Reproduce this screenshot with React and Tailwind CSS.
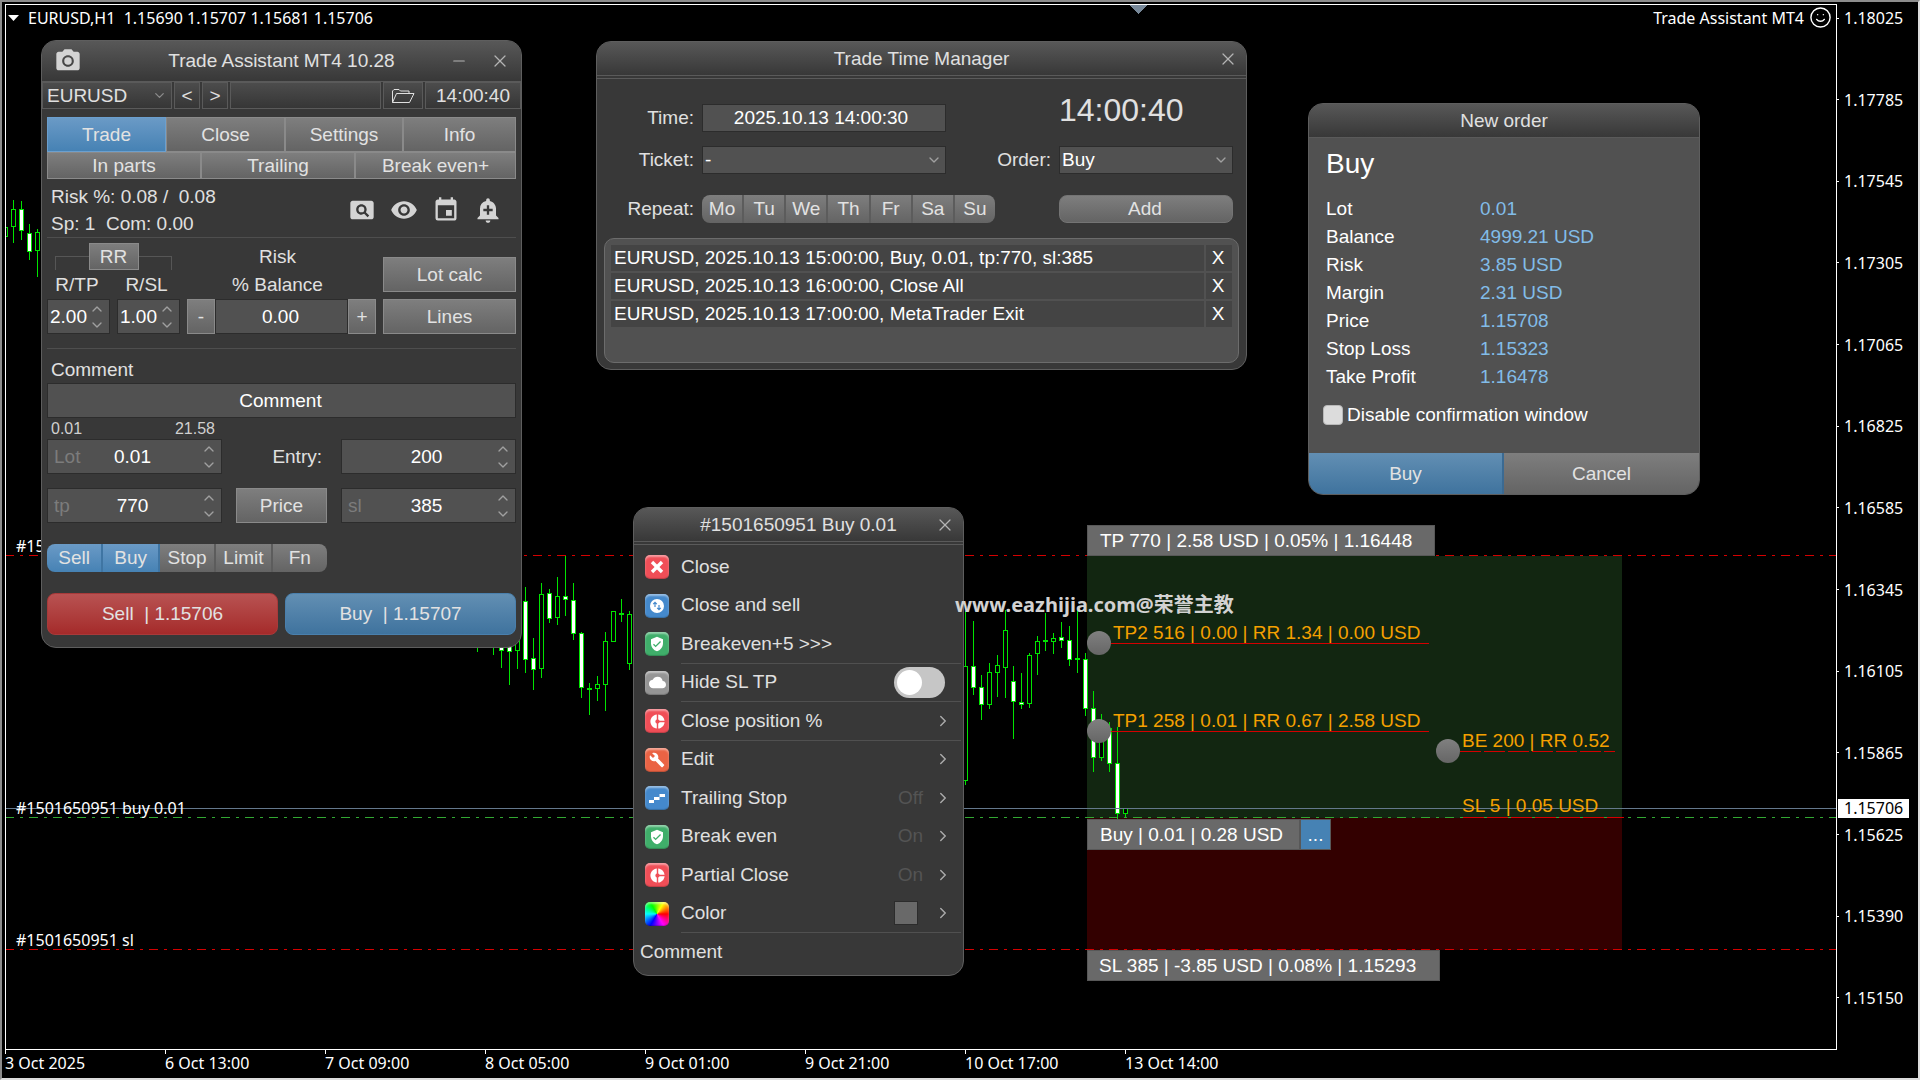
import React, { useState } from 'react';
import {
  MdPhotoCamera,
  MdPageview,
  MdVisibility,
  MdEvent,
  MdAddAlert,
  MdVerifiedUser,
  MdCloud,
  MdDonutSmall,
  MdBuild,
} from 'react-icons/md';
import { ChevronDown, ChevronUp, ChevronRight, Smile, X, Minus } from 'lucide-react';

// Price scale, top to bottom
const prices = [
  '1.18025', '1.17785', '1.17545', '1.17305', '1.17065', '1.16825', '1.16585',
  '1.16345', '1.16105', '1.15865', '1.15625', '1.15390', '1.15150',
];

const dates = [
  '3 Oct 2025', '6 Oct 13:00', '7 Oct 09:00', '8 Oct 05:00',
  '9 Oct 01:00', '9 Oct 21:00', '10 Oct 17:00', '13 Oct 14:00',
];

// [x, high, low, body top, body bottom, 1 = bearish (filled)]
const candles = [
  [5, 165, 252, 227, 237, 0],
  [13, 200, 243, 209, 227, 0],
  [21, 201, 240, 209, 231, 1],
  [29, 224, 260, 233, 252, 1],
  [37, 229, 277, 232, 251, 0],
  [477, 600, 652, 610, 640, 0],
  [493, 600, 655, 610, 640, 0],
  [501, 600, 668, 610, 651, 1],
  [509, 600, 685, 610, 652, 1],
  [517, 600, 669, 610, 651, 0],
  [525, 587, 673, 601, 660, 1],
  [533, 638, 690, 658, 670, 1],
  [541, 583, 678, 594, 669, 0],
  [549, 589, 623, 593, 619, 1],
  [557, 577, 625, 596, 618, 0],
  [565, 556, 616, 596, 600, 1],
  [573, 583, 640, 600, 634, 1],
  [581, 632, 698, 633, 688, 1],
  [589, 683, 715, 688, 690, 0],
  [597, 676, 701, 684, 689, 0],
  [605, 632, 711, 641, 685, 0],
  [613, 611, 642, 611, 642, 0],
  [621, 599, 622, 613, 615, 0],
  [629, 611, 670, 614, 664, 0],
  [965, 611, 785, 666, 781, 0],
  [973, 621, 695, 666, 688, 1],
  [981, 675, 720, 687, 705, 1],
  [989, 663, 709, 672, 705, 0],
  [997, 655, 697, 665, 673, 0],
  [1005, 610, 698, 630, 668, 0],
  [1013, 666, 739, 681, 702, 1],
  [1021, 673, 709, 702, 705, 1],
  [1029, 653, 708, 655, 704, 0],
  [1037, 636, 675, 641, 654, 0],
  [1045, 613, 651, 640, 642, 0],
  [1053, 633, 654, 638, 642, 0],
  [1061, 622, 648, 637, 641, 1],
  [1069, 626, 666, 640, 660, 1],
  [1077, 609, 673, 658, 660, 0],
  [1085, 653, 716, 659, 709, 1],
  [1093, 691, 772, 708, 758, 1],
  [1101, 714, 761, 728, 758, 0],
  [1109, 722, 772, 728, 764, 1],
  [1117, 727, 819, 763, 814, 1],
  [1125, 808, 817, 808, 814, 0],
];

const scheduled = [
  'EURUSD, 2025.10.13 15:00:00, Buy, 0.01, tp:770, sl:385',
  'EURUSD, 2025.10.13 16:00:00, Close All',
  'EURUSD, 2025.10.13 17:00:00, MetaTrader Exit',
];

const orderDetails = [
  ['Lot', '0.01'],
  ['Balance', '4999.21 USD'],
  ['Risk', '3.85 USD'],
  ['Margin', '2.31 USD'],
  ['Price', '1.15708'],
  ['Stop Loss', '1.15323'],
  ['Take Profit', '1.16478'],
];

const windowClass = 'absolute flex flex-col overflow-hidden rounded-[15px] border border-[#5e5e5e] bg-[#383838]';
const greyButton = 'flex items-center justify-center border border-[#8a8a8a] bg-gradient-to-b from-[#7e7e7e] to-[#646464] text-[#e2e2e2]';
const blueButton = 'flex items-center justify-center border border-[#6b9fce] bg-gradient-to-b from-[#6a9ac6] to-[#4682b4] text-[#e2e2e2]';
const field = 'border border-[#2c2c2c] bg-[#515151] text-white';
const toolCell = 'flex items-center border border-[#5a5a5a] bg-gradient-to-b from-[#4c4c4c] to-[#363636]';

const TitleBar = ({ title, height, left, right }) => (
  <header className={`grid shrink-0 grid-cols-[1fr_auto_1fr] items-center border-b border-[#5a5a5a] bg-gradient-to-b from-[#585858] to-[#383838] ${height}`}>
    <div className="flex items-center pl-[12px]">{left}</div>
    <h2 className="text-[#e0e0e0]">{title}</h2>
    <div className="flex items-center justify-end pr-[8px] text-[#b4b4b4]">{right}</div>
  </header>
);

const CloseButton = () => (
  <button aria-label="Close window">
    <X size={20} strokeWidth={1.5} />
  </button>
);

// Text box with up/down arrows and an optional faint caption
const Spinner = ({ label, caption, value, compact }) => (
  <div className={`flex h-[35px] items-center ${compact ? 'w-[63px]' : 'min-w-0'} ${field}`}>
    {!compact && <span className="w-[20px] shrink-0 whitespace-nowrap pl-[6px] text-[#7c7c7c]">{caption}</span>}
    <input
      aria-label={label}
      defaultValue={value}
      className={compact ? 'w-[42px] bg-transparent pl-[2px] outline-none' : 'w-0 min-w-0 flex-1 bg-transparent text-center outline-none'}
    />
    <div className={`flex shrink-0 flex-col items-center text-[#a0a0a0] ${compact ? 'w-[14px]' : 'w-[24px]'}`}>
      <button aria-label={`${label} up`}><ChevronUp size={16} strokeWidth={2} /></button>
      <button aria-label={`${label} down`}><ChevronDown size={16} strokeWidth={2} /></button>
    </div>
  </div>
);

const SegmentButton = ({ children, active, first, last }) => (
  <button
    className={`flex flex-1 items-center justify-center text-[#e2e2e2] ${last ? '' : 'border-r-2'} ${first ? 'rounded-l-[8px]' : ''} ${last ? 'rounded-r-[8px]' : ''} ${
      active ? 'border-[#3f75a3] bg-gradient-to-b from-[#6a9ac6] to-[#4682b4]' : 'border-[#5c5c5c] bg-gradient-to-b from-[#7e7e7e] to-[#646464]'
    }`}
  >
    {children}
  </button>
);

const TradePanel = () => {
  const tabs = ['Trade', 'Close', 'Settings', 'Info'];
  const modes = ['Sell', 'Buy', 'Stop', 'Limit', 'Fn'];
  const [tab, setTab] = useState('Trade');

  return (
    <section className={`${windowClass} left-[41px] top-[40px] w-[481px]`}>
      <TitleBar
        title="Trade Assistant MT4 10.28"
        height="h-[41px]"
        left={<MdPhotoCamera size={28} className="text-[#d4d4d4]" />}
        right={
          <div className="flex items-center gap-[22px] pr-[3px]">
            <button aria-label="Minimize"><Minus size={18} strokeWidth={1.5} /></button>
            <CloseButton />
          </div>
        }
      />
      <div className="flex h-[27px] shrink-0 gap-[2px] text-[#e0e0e0]">
        <div className={`relative w-[130px] ${toolCell}`}>
          <select aria-label="Symbol" className="w-full appearance-none pl-[4px] outline-none">
            <option>EURUSD</option>
          </select>
          <ChevronDown size={15} className="pointer-events-none absolute right-[4px] text-[#8c8c8c]" />
        </div>
        <button className={`w-[26px] justify-center ${toolCell}`}>&lt;</button>
        <button className={`w-[26px] justify-center ${toolCell}`}>&gt;</button>
        <div className={`flex-1 ${toolCell}`} />
        <button aria-label="Open file" className={`w-[40px] justify-center ${toolCell}`}>
          <svg width="24" height="16" viewBox="0 0 24 16" fill="none" stroke="currentColor" strokeLinejoin="round">
            <path d="M1.500 14.500V3L3 1.500h5L9.500 3H18v2.500M1.500 14.500L5.500 5.500H23l-4.500 9z" />
          </svg>
        </button>
        <div className={`w-[96px] justify-center ${toolCell}`}>14:00:40</div>
      </div>

      <div className="px-[5px] pb-[12px] pt-[8px]">
        <nav className="grid grid-cols-[119px_119px_118px_1fr]">
          {tabs.map((name) => (
            <button key={name} onClick={() => setTab(name)} className={`h-[35px] ${name === tab ? blueButton : greyButton}`}>
              {name}
            </button>
          ))}
        </nav>
        <nav className="grid grid-cols-[154px_154px_1fr]">
          <button className={`h-[27px] ${greyButton}`}>In parts</button>
          <button className={`h-[27px] ${greyButton}`}>Trailing</button>
          <button className={`h-[27px] ${greyButton}`}>Break even+</button>
        </nav>

        <div className="flex items-center justify-between border-b border-[#4e4e4e] pl-[4px] pr-[14px] pt-[4px] leading-[27px] text-[#e0e0e0]">
          <div className="whitespace-pre">
            <p>{'Risk %: 0.08 /  0.08'}</p>
            <p>{'Sp: 1  Com: 0.00'}</p>
          </div>
          <div className="flex gap-[14px] text-[#d4d4d4]">
            <button aria-label="Find"><MdPageview size={28} /></button>
            <button aria-label="Show"><MdVisibility size={28} /></button>
            <button aria-label="Schedule"><MdEvent size={28} /></button>
            <button aria-label="Add alert"><MdAddAlert size={28} /></button>
          </div>
        </div>

        {/* Risk settings */}
        <div className="grid grid-cols-[133px_1fr_133px] gap-x-[7px] border-b border-[#4e4e4e] pb-[14px] pt-[5px] text-[#e0e0e0]">
          <div>
            <div className="flex h-[27px] items-end justify-center px-[8px]">
              <span className="h-[14px] flex-1 border-l border-t border-[#565656]" />
              <button className={`h-full w-[50px] ${greyButton}`}>RR</button>
              <span className="h-[14px] flex-1 border-r border-t border-[#565656]" />
            </div>
            <div className="flex justify-between text-center leading-[29px]">
              <span className="w-[60px]">R/TP</span>
              <span className="w-[67px]">R/SL</span>
            </div>
            <div className="flex justify-between">
              <Spinner label="R/TP" value="2.00" compact />
              <Spinner label="R/SL" value="1.00" compact />
            </div>
          </div>
          <div>
            <p className="pr-[8px] text-center leading-[28px]">Risk</p>
            <p className="pr-[8px] text-center leading-[28px]">% Balance</p>
            <div className="grid h-[35px] grid-cols-[28px_1fr_28px]">
              <button className={greyButton}>-</button>
              <input aria-label="Risk percent of balance" defaultValue="0.00" className={`min-w-0 pr-[2px] text-center outline-none ${field}`} />
              <button className={greyButton}>+</button>
            </div>
          </div>
          <div className="flex flex-col gap-[7px] pt-[14px]">
            <button className={`h-[35px] ${greyButton}`}>Lot calc</button>
            <button className={`h-[35px] ${greyButton}`}>Lines</button>
          </div>
        </div>

        <label className="block pl-[4px] pt-[8px] leading-[26px] text-[#e0e0e0]" htmlFor="comment">Comment</label>
        <input id="comment" defaultValue="Comment" className={`h-[35px] w-full pr-[2px] text-center outline-none ${field}`} />
        <div className="flex w-[175px] justify-between pl-[4px] pr-[7px] text-[16px] leading-[21px] text-[#d0d0d0]">
          <span>0.01</span>
          <span>21.58</span>
        </div>
        <div className="grid grid-cols-[175px_1fr_175px] gap-y-[14px]">
          <Spinner label="Lot" caption="Lot" value="0.01" />
          <span className="self-center pr-[19px] text-right text-[#e0e0e0]">Entry:</span>
          <Spinner label="Entry" value="200" />
          <Spinner label="Take profit" caption="tp" value="770" />
          <button className={`mx-[14px] ${greyButton}`}>Price</button>
          <Spinner label="Stop loss" caption="sl" value="385" />
        </div>

        <div className="mt-[21px] flex h-[28px] w-[280px]">
          {modes.map((mode, i) => (
            <SegmentButton key={mode} active={i < 2} first={i === 0} last={i === modes.length - 1}>{mode}</SegmentButton>
          ))}
        </div>
        <div className="mt-[21px] grid h-[42px] grid-cols-2 gap-[7px] whitespace-pre text-[#e2e2e2]">
          <button className="rounded-[8px] border border-[#a83a3a] bg-gradient-to-b from-[#b85252] to-[#a52a2a]">{'Sell  | 1.15706'}</button>
          <button className="rounded-[8px] border border-[#4a80ad] bg-gradient-to-b from-[#628fb3] to-[#3f739e]">{'Buy  | 1.15707'}</button>
        </div>
      </div>
    </section>
  );
};

const TimeManager = () => {
  const days = ['Mo', 'Tu', 'We', 'Th', 'Fr', 'Sa', 'Su'];

  return (
    <section className={`${windowClass} left-[596px] top-[41px] w-[651px] text-[#e0e0e0]`}>
      <TitleBar title="Trade Time Manager" height="h-[34px]" right={<CloseButton />} left={null} />
      <div className="mt-[2px] border-t border-[#5a5a5a] pt-[15px]">
        <div className="grid grid-cols-[97px_244px_97px_174px] gap-x-2">
          <label htmlFor="tm-time" className="self-end text-right leading-[28px]">Time:</label>
          <input id="tm-time" defaultValue="2025.10.13 14:00:30" className={`h-[28px] self-end pr-[6px] text-center outline-none ${field}`} />
          <span />
          <span className="h-[38px] self-start text-[32px] leading-[32px]">14:00:40</span>

          <label htmlFor="tm-ticket" className="mt-[14px] text-right leading-[28px]">Ticket:</label>
          <div className={`relative mt-[14px] flex h-[28px] items-center ${field}`}>
            <select id="tm-ticket" className="w-full appearance-none pl-[2px] outline-none"><option>-</option></select>
            <ChevronDown size={16} className="pointer-events-none absolute right-[3px] text-[#a0a0a0]" />
          </div>
          <label htmlFor="tm-order" className="mt-[14px] text-right leading-[28px]">Order:</label>
          <div className={`relative mt-[14px] flex h-[28px] items-center ${field}`}>
            <select id="tm-order" className="w-full appearance-none pl-[2px] outline-none"><option>Buy</option></select>
            <ChevronDown size={16} className="pointer-events-none absolute right-[3px] text-[#a0a0a0]" />
          </div>

          <span className="mt-[21px] text-right leading-[28px]">Repeat:</span>
          <div className="col-span-2 mt-[21px] flex h-[28px] w-[293px]">
            {days.map((day, i) => (
              <SegmentButton key={day} first={i === 0} last={i === 6}>{day}</SegmentButton>
            ))}
          </div>
          <button className="mt-[21px] flex h-[28px] items-center justify-center rounded-[8px] border border-[#747474] bg-gradient-to-b from-[#7e7e7e] to-[#646464] pr-[2px] text-[#e2e2e2]">
            Add
          </button>
        </div>

        <ul className="mx-[7px] mb-[6px] mt-[15px] flex h-[125px] flex-col gap-[2px] rounded-[10px] border border-[#6c6c6c] bg-[#515151] p-[6px] text-white">
          {scheduled.map((item) => (
            <li key={item} className="grid h-[26px] grid-cols-[1fr_26px] gap-[2px] leading-[26px]">
              <span className="bg-[#444444] pl-[3px]">{item}</span>
              <button className="bg-[#444444] pr-[2px]" aria-label={`Remove ${item}`}>X</button>
            </li>
          ))}
        </ul>
      </div>
    </section>
  );
};

const NewOrder = () => (
  <section className={`${windowClass} left-[1308px] top-[103px] w-[392px] text-white`}>
    <TitleBar title="New order" height="h-[34px]" left={null} right={null} />
    <div className="bg-[#515151] px-[17px] pb-[14px] pt-[8px]">
      <h3 className="text-[28px] leading-[36px]">Buy</h3>
      <table className="mt-[13px] w-full">
        <tbody>
          {orderDetails.map(([name, value]) => (
            <tr key={name} className="leading-[28px]">
              <th scope="row" className="w-[154px] text-left font-normal">{name}</th>
              <td className="text-[#82bce8]">{value}</td>
            </tr>
          ))}
        </tbody>
      </table>
    </div>
    <label className="flex h-[48px] items-start gap-[4px] bg-[#515151] pl-[14px] leading-[20px]">
      <input type="checkbox" className="size-[20px] appearance-none rounded-[4px] border border-[#b8b8b8] bg-[#dcdcdc]" />
      Disable confirmation window
    </label>
    <div className="grid h-[41px] grid-cols-2 text-[#e2e2e2]">
      <button className="border-r-2 border-[#3b6a92] bg-gradient-to-b from-[#628fb3] to-[#3f739e]">Buy</button>
      <button className="bg-gradient-to-b from-[#7e7e7e] to-[#646464]">Cancel</button>
    </div>
  </section>
);

const SwapIcon = () => (
  <svg width="16" height="16" viewBox="0 0 16 16">
    <circle cx="8" cy="8" r="7" fill="#fff" />
    <path d="M6 9V4.500M4.200 6.200L6 4.400l1.800 1.800M10 7v4.500M8.200 9.800l1.800 1.800 1.800-1.800" stroke="#4489cc" strokeWidth="1.200" fill="none" />
  </svg>
);

const StairsIcon = () => (
  <svg width="18" height="16" viewBox="0 0 18 16">
    <path d="M1 11.500h5M6 8.500h5.500M11.500 5.500h5.500" stroke="#fff" strokeWidth="3" fill="none" />
  </svg>
);

const menu = [
  { text: 'Close', icon: <X size={20} strokeWidth={4} strokeLinecap="butt" />, tint: 'bg-[#f04e57]' },
  { text: 'Close and sell', icon: <SwapIcon />, tint: 'bg-[#4489cc]' },
  { text: 'Breakeven+5 >>>', icon: <MdVerifiedUser size={16} />, tint: 'bg-[#3fae6a]', line: true },
  { text: 'Hide SL TP', icon: <MdCloud size={17} />, tint: 'bg-[#959595]', line: true, toggle: true },
  { text: 'Close position %', icon: <MdDonutSmall size={17} />, tint: 'bg-[#f04e57]', line: true, arrow: true },
  { text: 'Edit', icon: <MdBuild size={16} />, tint: 'bg-[#ea6344]', arrow: true },
  { text: 'Trailing Stop', icon: <StairsIcon />, tint: 'bg-[#4489cc]', state: 'Off', arrow: true },
  { text: 'Break even', icon: <MdVerifiedUser size={16} />, tint: 'bg-[#3fae6a]', state: 'On', arrow: true },
  { text: 'Partial Close', icon: <MdDonutSmall size={17} />, tint: 'bg-[#f04e57]', state: 'On', arrow: true },
  { text: 'Color', icon: null, tint: 'bg-[conic-gradient(from_90deg,#f00,#f0f,#00f,#0ff,#0f0,#ff0,#f00)]', swatch: true, line: true, arrow: true },
];

const MenuRow = ({ item }) => {
  const Row = item.toggle ? 'label' : 'button';
  return (
    <Row className="flex w-full flex-1 items-stretch pl-[11px] pr-[2px] text-left">
      <span className={`flex size-[24px] items-center justify-center self-center rounded-[5px] text-white shadow-[inset_0_2px_2px_rgba(255,255,255,0.45),inset_0_-1px_1px_rgba(0,0,0,0.2)] ${item.tint}`}>
        {item.icon}
      </span>
      <span className={`ml-[12px] flex flex-1 items-center border-b ${item.line ? 'border-[#505050]' : 'border-transparent'}`}>
        <span className="flex-1">{item.text}</span>
        {item.toggle && (
          <span className="relative mr-[16px] flex">
            <input type="checkbox" className="peer h-[31px] w-[51px] appearance-none rounded-full bg-[#c6c6c6]" />
            <span className="pointer-events-none absolute left-[3px] top-[3px] size-[25px] rounded-full bg-white peer-checked:left-[23px]" />
          </span>
        )}
        {item.state && <span className="text-[#545454]">{item.state}</span>}
        {item.swatch && <span className="mr-[5px] size-[24px] border border-[#2c2c2c] bg-[#696969]" />}
        {item.arrow && <ChevronRight size={18} className="ml-[11px] mr-[9px] text-[#a8a8a8]" />}
      </span>
    </Row>
  );
};

const PositionMenu = () => (
  <section className={`${windowClass} left-[633px] top-[507px] w-[331px] text-[#e0e0e0]`}>
    <TitleBar title="#1501650951 Buy 0.01" height="h-[34px]" left={null} right={<CloseButton />} />
    <div className="mt-[2px] border-t border-[#5a5a5a] pt-[3px]">
      <div className="flex h-[385px] flex-col">
        {menu.map((item) => <MenuRow key={item.text} item={item} />)}
      </div>
      <p className="h-[42px] pl-[6px] leading-[38px]">Comment</p>
    </div>
  </section>
);

const Candle = ({ candle: [x, high, low, top, bottom, filled] }) => (
  <g shapeRendering="crispEdges">
    <rect x={x} y={high} width="1" height={low - high} fill="#00e400" />
    <rect
      x={x - 1.5}
      y={top + 0.5}
      width="4"
      height={Math.max(bottom - top - 1, 1)}
      fill={filled ? '#fff' : '#000'}
      stroke="#00e400"
    />
  </g>
);

const Chart = () => (
  <svg className="absolute inset-0 h-full w-full" shapeRendering="crispEdges">
    <path d="M1130 5h17l-8.500 9z" fill="#778899" />
    <rect x="1087" y="556" width="535" height="262" fill="#122611" />
    <rect x="1087" y="818" width="535" height="132" fill="#330000" />
    {candles.map((candle) => <Candle key={candle[0]} candle={candle} />)}
    <g strokeDasharray="9 6 3 6">
      <line x1="5" x2="100%" y1="555.5" y2="555.5" stroke="#d40000" />
      <line x1="5" x2="100%" y1="949.5" y2="949.5" stroke="#d40000" />
      <line x1="5" x2="100%" y1="817.5" y2="817.5" stroke="#32a832" />
    </g>
    <line x1="5" x2="100%" y1="808.5" y2="808.5" stroke="#64788c" />
    <g stroke="#d40000">
      <line x1="1111" x2="1429" y1="643.5" y2="643.5" />
      <line x1="1111" x2="1429" y1="731.5" y2="731.5" />
      <line x1="1460" x2="1615" y1="751.5" y2="751.5" strokeDasharray="21 3" />
      <line x1="1463" x2="1624" y1="817.5" y2="817.5" strokeDasharray="21 3" />
    </g>
  </svg>
);

const Level = ({ place, children }) => (
  <div className={`absolute flex items-end gap-[2px] text-[#f5a000] ${place}`}>
    <span className="size-[24px] rounded-full bg-gradient-to-b from-[#808080] to-[#666666]" />
    <span className="mb-[10px] leading-[24px]">{children}</span>
  </div>
);

const tagClass = 'flex h-[31px] items-center border border-[#585858] bg-[#696969] text-white';

export default function App() {
  return (
    <div className="flex h-screen min-h-[1040px] flex-col overflow-hidden border-2 border-[#8c8c8c] border-b-[#dcdcdc] border-r-[#dcdcdc] bg-black pl-[3px] pt-[2px] font-['Liberation_Sans',Arial,sans-serif] text-[19px] leading-[24px]">
      <div className="flex min-h-0 flex-1">
        <main className="relative flex-1 overflow-hidden border border-white">
          <div className="absolute -left-[6px] -top-[5px] bottom-0 right-0">
            <Chart />

            <div className="absolute left-[8px] right-[4px] top-[6px] flex items-center justify-between font-['Noto_Sans',sans-serif] text-[16px] leading-[22px] text-white">
              <div className="flex items-center gap-[9px] whitespace-pre">
                <svg width="11" height="6" viewBox="0 0 11 6"><path d="M0 0h11L5.500 6z" fill="#fff" /></svg>
                <span>{'EURUSD,H1  1.15690 1.15707 1.15681 1.15706'}</span>
              </div>
              <div className="flex items-center gap-[5px]">
                <span>Trade Assistant MT4</span>
                <Smile size={23} strokeWidth={1.5} />
              </div>
            </div>
            <div className="font-['Noto_Sans',sans-serif] text-[16px] leading-[22px] text-white">
              <span className="absolute left-[16px] top-[535px]">#15</span>
              <span className="absolute left-[16px] top-[797px]">#1501650951 buy 0.01</span>
              <span className="absolute left-[16px] top-[929px]">#1501650951 sl</span>
            </div>

            <div className={`absolute left-[1087px] top-[525px] w-[348px] pl-[12px] ${tagClass}`}>TP 770 | 2.58 USD | 0.05% | 1.16448</div>
            <div className="absolute left-[1087px] top-[819px] flex">
              <div className={`w-[213px] pl-[12px] ${tagClass}`}>Buy | 0.01 | 0.28 USD</div>
              <button className="h-[31px] w-[31px] border border-[#585858] bg-[#4682b4] text-white">...</button>
            </div>
            <div className={`absolute left-[1087px] top-[950px] w-[353px] pl-[11px] ${tagClass}`}>SL 385 | -3.85 USD | 0.08% | 1.15293</div>

            <Level place="left-[1087px] top-[621px]">TP2 516 | 0.00 | RR 1.34 | 0.00 USD</Level>
            <Level place="left-[1087px] top-[709px]">TP1 258 | 0.01 | RR 0.67 | 2.58 USD</Level>
            <Level place="left-[1436px] top-[729px]">BE 200 | RR 0.52</Level>
            <span className="absolute left-[1462px] top-[794px] text-[#f5a000]">SL 5 | 0.05 USD</span>

            <TradePanel />
            <TimeManager />
            <NewOrder />
            <PositionMenu />

            <p className="absolute left-[955px] top-[593px] font-['Noto_Sans','Noto_Sans_CJK_SC',sans-serif] text-[20px] font-bold text-[#d2d2d2]">
              www.eazhijia.com@荣誉主教
            </p>
          </div>
        </main>

        {/* Price scale */}
        <aside className="relative flex w-[81px] flex-col justify-between pb-[41px] pt-[3px] font-['Noto_Sans',sans-serif] text-[16px] leading-[22px] text-white">
          {prices.map((price) => (
            <div key={price} className="flex items-center gap-[5px]">
              <span className="h-px w-[2px] bg-white" />
              {price}
            </div>
          ))}
          <div className="absolute left-px top-[795px] h-[19px] w-[71px] bg-white pl-[6px] leading-[19px] text-black">1.15706</div>
        </aside>
      </div>

      {/* Time scale */}
      <footer className="flex h-[28px] shrink-0 font-['Noto_Sans',sans-serif] text-[16px] leading-[18px] text-white">
        {dates.map((date) => (
          <div key={date} className="w-[160px] shrink-0">
            <span className="block h-[4px] w-px bg-white" />
            {date}
          </div>
        ))}
      </footer>
    </div>
  );
}
